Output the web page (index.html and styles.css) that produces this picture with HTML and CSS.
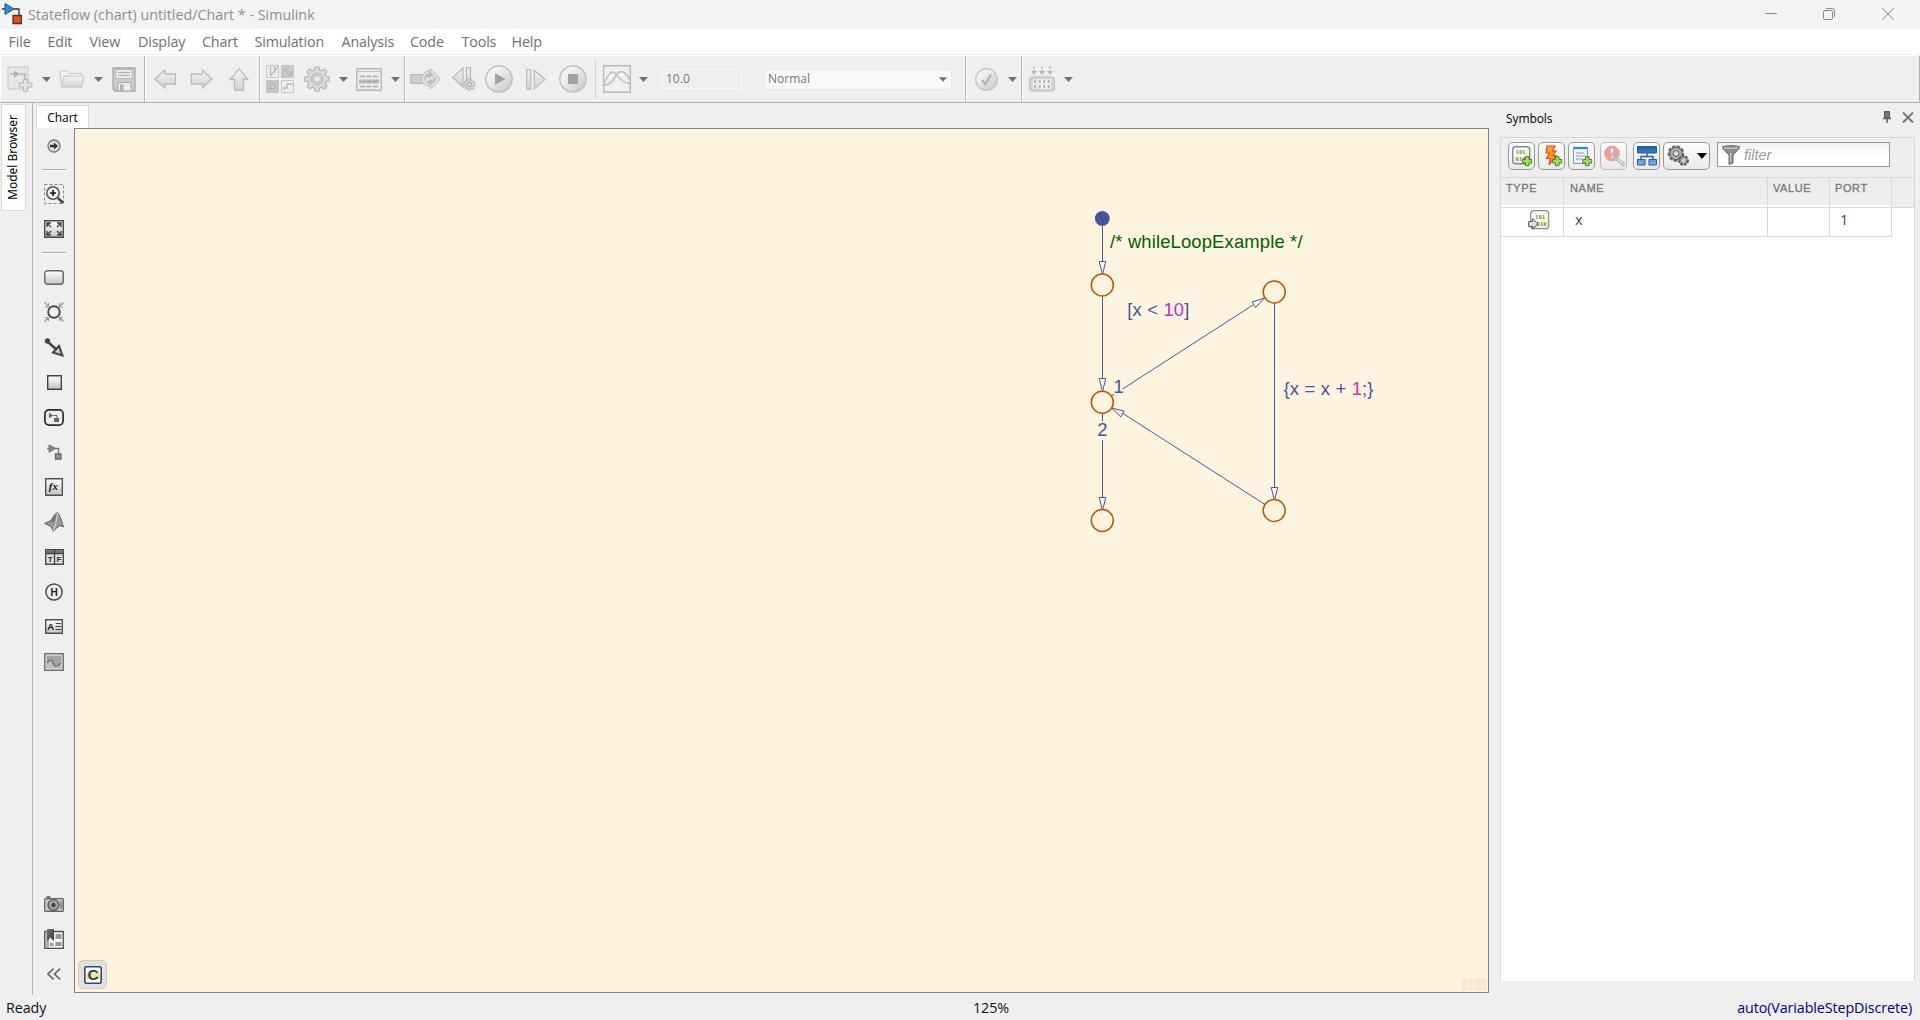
FILE: index.html
```html
<!DOCTYPE html>
<html lang="en">
<head>
<meta charset="utf-8">
<title>Stateflow (chart) untitled/Chart * - Simulink</title>
<link rel="stylesheet" href="styles.css">
</head>
<body>
<svg class="defs" width="0" height="0" aria-hidden="true">
  <defs>
    <linearGradient id="lite" x1="0" y1="0" x2="0" y2="1"><stop offset="0" stop-color="#f4f4f4"/><stop offset="1" stop-color="#d2d2d2"/></linearGradient>
    <linearGradient id="disc" x1="0" y1="0" x2="1" y2="1"><stop offset="0.3" stop-color="#f2f2f2"/><stop offset="1" stop-color="#c4c4c4"/></linearGradient>
    <linearGradient id="steel" x1="0" y1="0" x2="0" y2="1"><stop offset="0" stop-color="#ffffff"/><stop offset="1" stop-color="#c4c4c4"/></linearGradient>
    <linearGradient id="dark" x1="0" y1="0" x2="1" y2="1"><stop offset="0" stop-color="#777"/><stop offset="1" stop-color="#333"/></linearGradient>
    <linearGradient id="blue" x1="0" y1="0" x2="0" y2="1"><stop offset="0" stop-color="#1d5fae"/><stop offset="1" stop-color="#7db4e6"/></linearGradient>
    <linearGradient id="cream" x1="0" y1="0" x2="1" y2="1"><stop offset="0" stop-color="#ffffff"/><stop offset="1" stop-color="#fff0a0"/></linearGradient>
    <symbol id="plus" viewBox="0 0 12 12"><path d="M4 .8h4V4h3.200v4H8v3.200H4V8H.8V4H4z" fill="#a4dc5c" stroke="#3f7d1c" stroke-width="1.100"/></symbol>
    <symbol id="tri" viewBox="0 0 9 5"><path d="M0 0h9L4.500 5z" fill="#707174"/></symbol>
  </defs>
</svg>

<header class="titlebar">
  <svg class="app-icon" width="20" height="22" viewBox="0 0 20 22">
    <path d="M0 6h4M12 6h5v8" fill="none" stroke="#333" stroke-width="1.300"/>
    <path d="M3 .5L12 6 3 11.500z" fill="#2d8fd0" stroke="#125a90"/>
    <path d="M11 12.500h8.500v8H11z" fill="#e0511b" stroke="#7c2408" stroke-width="1.300"/>
  </svg>
  <h1 class="title"><span>Stateflow (chart) untitled/Chart * - Simulink</span></h1>
  <div class="window-controls">
    <svg width="12" height="12" viewBox="0 0 12 12"><path d="M0 5.500h12"/></svg>
    <svg width="12" height="12" viewBox="0 0 12 12"><rect x=".5" y="2.500" width="9" height="9" rx="1.500"/><path d="M3 .6h6.500q2 0 2 2V9"/></svg>
    <svg width="12" height="12" viewBox="0 0 12 12"><path d="M.3.3l11.400 11.400M11.700.3L.3 11.700"/></svg>
  </div>
</header>

<nav class="menubar">
  <a>File</a><a>Edit</a><a>View</a><a>Display</a><a>Chart</a><a>Simulation</a><a>Analysis</a><a>Code</a><a>Tools</a><a>Help</a>
</nav>

<div class="toolbar">
  <div class="group g-file">
    <svg width="26" height="26" viewBox="0 0 26 26"><path d="M1 1h20v22H1z" fill="#e6e6e6" stroke="#c8c8c8"/><path d="M3 8h4m6 0h5v5" stroke="#b4b4b4" fill="none" stroke-width="1.500"/><path d="M7 4.500L13 8l-6 3.500z" fill="#b0b0b0"/><path d="M16.500 13.500h4V17H25v4h-4.500v4.500h-4V21H12v-4h4.500z" fill="#e2e2e2" stroke="#b8b8b8"/></svg>
    <svg class="tri" width="9" height="5"><use href="#tri"/></svg>
    <svg width="26" height="18" viewBox="0 0 26 18"><path d="M2.500 16.500L.8 1h7l1.700 2.500h13V6" fill="#f4f4f4" stroke="#c6c6c6"/><path d="M5 6h20l-2 11H2.500z" fill="url(#lite)" stroke="#c6c6c6"/></svg>
    <svg class="tri" width="9" height="5"><use href="#tri"/></svg>
    <svg width="24" height="25" viewBox="0 0 24 25"><path d="M1 1h22v23H3l-2-2z" fill="#ccc" stroke="#aaa" stroke-width="1.300"/><path d="M4 2.500h16v9H4z" fill="#f2f2f2" stroke="#b8b8b8"/><path d="M6 5.500h12M6 8.500h12" stroke="#b2b2b2" stroke-width="1.400"/><path d="M6 15.500h13V24H6z" fill="#eee" stroke="#aaa"/><path d="M8 17.500h3.500V24H8z" fill="#b0b0b0"/></svg>
  </div>
  <div class="group g-nav">
    <svg width="22" height="20" viewBox="0 0 22 20"><path d="M.8 10L11 1v4h10.500v10H11v4z" fill="url(#lite)" stroke="#bcbcbc" stroke-width="1.300"/></svg>
    <svg width="23" height="20" viewBox="0 0 22 20"><path d="M21.200 10L12 1v4H.7v10H12v4z" fill="url(#lite)" stroke="#bcbcbc" stroke-width="1.300"/></svg>
    <svg width="20" height="23" viewBox="0 0 20 23"><path d="M10 .8L1 11.500h4.500v10.800h9V11.500H19z" fill="url(#lite)" stroke="#bcbcbc" stroke-width="1.300"/></svg>
  </div>
  <div class="group g-model">
    <svg width="28" height="28" viewBox="0 0 28 28"><g stroke="#c4c4c4"><path d="M.5.500h12v12H.5z" fill="#ededed"/><path d="M15.500.500h12v12h-12z" fill="#c8c8c8"/><path d="M.5 15.500h12v12H.5z" fill="#c4c4c4"/><path d="M15.500 15.500h12v12h-12z" fill="#eee"/></g><path d="M4.500 1v10M4.500 11L12 2M8.500 1v5.500M17 7q2.500-6 4.500 0t4.500 0M18 25v-2h3v-4h5.500" fill="none" stroke="#b8b8b8" stroke-width="1.300"/><path d="M4.500 19.500h4v4h-4z" fill="#d4d4d4" stroke="#aaa"/></svg>
    <svg width="26" height="26" viewBox="0 0 26 26"><path d="M11 1h4l.6 3 2 .9L20.200 3l2.800 2.800-1.800 2.600.9 2 3 .6v4l-3 .6-.9 2 1.800 2.600-2.800 2.800-2.600-1.800-2 .9-.6 3h-4l-.6-3-2-.9L5.800 23 3 20.200l1.800-2.600-.9-2-3-.6v-4l3-.6.9-2L3 5.800 5.800 3l2.600 1.900 2-.9z" fill="#dcdcdc" stroke="#b6b6b6" stroke-width="1.200"/><circle cx="13" cy="13" r="6" fill="#cecece" stroke="#b9b9b9"/><circle cx="13" cy="13" r="3.500" fill="#eee" stroke="#bbb"/></svg>
    <svg class="tri" width="9" height="5"><use href="#tri"/></svg>
    <svg width="26" height="23" viewBox="0 0 26 23"><path d="M.7.700h24.600v21.600H.7z" fill="#ececec" stroke="#b8b8b8" stroke-width="1.400"/><path d="M1 3.500h24" stroke="#c3c3c3"/><path d="M4 8.500h18" stroke="#aaa" stroke-width="1.400" stroke-dasharray="5 1.500"/><path d="M3 11.500h20v4H3z" fill="#bdbdbd"/><path d="M4.500 13.500h17M4 18.500h18" stroke="#aaa" stroke-width="1.300" stroke-dasharray="5 1.500"/></svg>
    <svg class="tri" width="9" height="5"><use href="#tri"/></svg>
  </div>
  <div class="group g-sim">
    <svg width="30" height="22" viewBox="0 0 30 22"><path d="M.7 6.500h11v9H.7z" fill="#cdcdcd" stroke="#b4b4b4"/><path d="M14 5q3-3 6-2V.5L29.300 9.500v3L20 21.300V18q-9 0-9-8 1-3 3-5z" fill="#dedede" stroke="#bfbfbf"/><path d="M15 11.500q0-5 5-5M18.500 4l3.500 2.500-3.500 2.800M25 9.500q0 5-5 5M21.500 12L18 14.500l3.500 2.800" fill="none" stroke="#b0b0b0" stroke-width="1.300"/></svg>
    <svg width="24" height="24" viewBox="0 0 24 24"><path d="M11 1L.8 10.500 11 20zM14.500.700h4v18h-4z" fill="url(#lite)" stroke="#b8b8b8" stroke-width="1.200"/><circle cx="17.500" cy="17.500" r="5" fill="#d8d8d8" stroke="#b8b8b8" stroke-width="2" stroke-dasharray="2.400 1"/><circle cx="17.500" cy="17.500" r="2" fill="#eee" stroke="#b0b0b0" stroke-width="1.300"/></svg>
    <svg width="28" height="28" viewBox="0 0 28 28"><circle cx="14" cy="14" r="13.200" fill="url(#disc)" stroke="#bcbcbc" stroke-width="1.300"/><path d="M10 8l10.500 6L10 20z" fill="#a2a2a2"/></svg>
    <svg width="20" height="21" viewBox="0 0 20 21"><path d="M.7.700h4v19.600h-4zM8.300 1.200L19 10.500 8.300 19.800z" fill="url(#lite)" stroke="#bdbdbd" stroke-width="1.300"/></svg>
    <svg width="28" height="28" viewBox="0 0 28 28"><circle cx="14" cy="14" r="13.200" fill="url(#disc)" stroke="#bcbcbc" stroke-width="1.300"/><path d="M9 9h10v10H9z" fill="#a2a2a2"/></svg>
    <i class="divider"></i>
    <svg width="28" height="28" viewBox="0 0 28 28"><path d="M.7.700h26.600v26.600H.7z" fill="#f0f0f0" stroke="#b8b8b8" stroke-width="1.400"/><path d="M1 18C4 13 6 7 10 7S16 18 27 18.500" fill="none" stroke="#bbb" stroke-width="1.300"/><path d="M1 20C6 20 9 18 12 12s9-9 15 3" fill="none" stroke="#c5c5c5" stroke-width="2"/></svg>
    <svg class="tri" width="9" height="5"><use href="#tri"/></svg>
    <div class="time">10.0</div>
    <div class="mode">Normal<svg width="8" height="5"><use href="#tri"/></svg></div>
  </div>
  <div class="group g-check">
    <svg width="23" height="23" viewBox="0 0 23 23"><circle cx="11.500" cy="11.500" r="10.800" fill="url(#disc)" stroke="#c2c2c2" stroke-width="1.300"/><path d="M7 12l3.500 4L16 6.500" fill="none" stroke="#b5b5b5" stroke-width="2.300"/></svg>
    <svg class="tri" width="9" height="5"><use href="#tri"/></svg>
  </div>
  <div class="group g-build">
    <svg width="26" height="26" viewBox="0 0 26 26"><path d="M5 0v7M13 0v7M21 0v7" stroke="#c0c0c0" stroke-width="1.400" stroke-dasharray="3 1"/><path d="M2 5h6L5 9zM10 5h6l-3 4zM18 5h6l-3 4z" fill="#b8b8b8"/><rect x=".7" y="11" width="24.600" height="14" rx="2" fill="#d6d6d6" stroke="#b9b9b9"/><path d="M4 15.500h18M4 20.500h18" stroke="#fafafa" stroke-width="4"/><path d="M5 15.500h16M5 20.500h16" stroke="#aaa" stroke-width="2.400" stroke-dasharray="2.400 2.100"/></svg>
    <svg class="tri" width="9" height="5"><use href="#tri"/></svg>
  </div>
</div>

<main class="workspace">
  <aside class="browser-strip"><div class="browser-tab">Model Browser</div></aside>
  <section class="editor">
    <div class="tabs"><div class="tab">Chart</div></div>
    <div class="editor-body">
      <div class="palette">
        <div class="tool first"><svg width="14" height="14" viewBox="0 0 14 14"><circle cx="7" cy="7" r="6" fill="#ddd" stroke="#777" stroke-width="1.300"/><path d="M3 5.800h4V3.500L11 7l-4 3.500V8.200H3z" fill="#333"/></svg></div>
        <hr>
        <div class="tool"><svg width="20" height="20" viewBox="0 0 20 20"><path d="M.5.500h19v19H.5z" fill="none" stroke="#888" stroke-dasharray="3 2"/><circle cx="9" cy="9" r="6.200" fill="#f4f4f4" stroke="#555" stroke-width="1.500"/><path d="M14 14l5 5" stroke="#444" stroke-width="2.500"/><path d="M6 9h6M9 6v6" stroke="#111" stroke-width="1.600"/></svg></div>
        <div class="tool"><svg width="20" height="18" viewBox="0 0 20 18"><path d="M.7.700h18.600v16.600H.7z" fill="url(#steel)" stroke="#4a4a4a" stroke-width="1.400"/><path d="M3 7V3h4M3 3l4 4M13 3h4v4m0-4l-4 4M3 11v4h4m-4 0l4-4m6 4h4v-4m0 4l-4-4" fill="none" stroke="#3c3c3c" stroke-width="1.300"/></svg></div>
        <hr>
        <div class="tool"><svg width="20" height="15" viewBox="0 0 20 15"><rect x=".7" y=".7" width="18.600" height="13.600" rx="3" fill="url(#steel)" stroke="#666" stroke-width="1.400"/></svg></div>
        <div class="tool"><svg width="20" height="20" viewBox="0 0 20 20"><circle cx="10" cy="10" r="5.800" fill="#f0f0f0" stroke="#484848" stroke-width="1.900"/><path d="M.5.500l4 4M4.500 1v4H1M19.500.500l-4 4M15.500 1v4H19M.5 19.500l4-4M1 15.500h3.500V19M19.500 19.500l-4-4M15.500 19v-3.500H19" fill="none" stroke="#999" stroke-width="1.200"/></svg></div>
        <div class="tool"><svg width="20" height="19" viewBox="0 0 20 19"><circle cx="3.500" cy="3" r="2.700" fill="#444"/><path d="M4 4l9 8" stroke="#444" stroke-width="2.400"/><path d="M18.500 17.500L9 14.500l6-6.500z" fill="#ccc" stroke="#444" stroke-width="2"/></svg></div>
        <div class="tool"><svg width="15" height="15" viewBox="0 0 15 15"><path d="M.7.700h13.600v13.600H.7z" fill="url(#steel)" stroke="#444" stroke-width="1.400"/></svg></div>
        <div class="tool"><svg width="20" height="17" viewBox="0 0 20 17"><rect x=".9" y=".9" width="18.200" height="15.200" rx="4" fill="#eee" stroke="#2c2c2c" stroke-width="1.700"/><path d="M5 4l4.500 2.500L5 9z" fill="#666"/><path d="M9.500 6.500H13V9" fill="none" stroke="#666"/><path d="M10 9h5v4h-5z" fill="#666"/></svg></div>
        <div class="tool"><svg width="15" height="16" viewBox="0 0 15 16"><path d="M0 4.500h2M8 4.500h3.500V10" fill="none" stroke="#777" stroke-width="1.300"/><path d="M2 .8l6.500 3.700L2 8.300z" fill="#888" stroke="#777"/><path d="M8.500 10h5.500v5H8.500z" fill="#999" stroke="#666" stroke-width="1.300"/></svg></div>
        <div class="tool"><svg width="18" height="18" viewBox="0 0 18 18"><path d="M.7.700h16.600v16.600H.7z" fill="url(#steel)" stroke="#505050" stroke-width="1.400"/><text x="3.800" y="12.300" class="glyph fx">fx</text></svg></div>
        <div class="tool"><svg width="20" height="20" viewBox="0 0 20 20"><path d="M.5 11.500L7 8.500Q11 1 13.500.500 15.500 2 19.500 15 16 12.500 13.500 15L9.500 19.500 7 14.500z" fill="#999" stroke="#555" stroke-width=".9"/><path d="M7 8.500l3 2.500L13.500.500" fill="#777"/><path d="M13.500 1Q12 13 9.500 19" fill="none" stroke="#ddd"/></svg></div>
        <div class="tool"><svg width="19" height="16" viewBox="0 0 19 16"><path d="M.7.700h17.600v14.600H.7z" fill="#ddd" stroke="#4a4a4a" stroke-width="1.400"/><path d="M1 1h17v3.500H1z" fill="#777"/><path d="M1 4.500h17M9.500 0v16" stroke="#444" stroke-width="1.300"/><text x="2.700" y="13" class="glyph tf">T</text><text x="11.600" y="13" class="glyph tf">F</text></svg></div>
        <div class="tool"><svg width="18" height="18" viewBox="0 0 18 18"><circle cx="9" cy="9" r="8.100" fill="#f0f0f0" stroke="#484848" stroke-width="1.500"/><text x="5.400" y="12.600" class="glyph hist">H</text></svg></div>
        <div class="tool"><svg width="18" height="15" viewBox="0 0 18 15"><path d="M.7.700h16.600v13.600H.7z" fill="url(#steel)" stroke="#505050" stroke-width="1.400"/><text x="2.200" y="11" class="glyph note">A</text><path d="M10.500 4.500H16M10.500 7.500H16M10.500 10.500H16" stroke="#444" stroke-width="1.200"/></svg></div>
        <div class="tool"><svg width="20" height="18" viewBox="0 0 20 18"><path d="M.7.700h18.600v16.600H.7z" fill="#ccc" stroke="#707070" stroke-width="1.300"/><path d="M3 3h14v12H3z" fill="#a4a4a4"/><path d="M3 9q4-5 6 0t7 1l1-2v7H3z" fill="#bfbfbf"/><path d="M3 10q4-6 6 0t8 0" fill="none" stroke="#707070" stroke-width="1.500"/></svg></div>
        <div class="spacer"></div>
        <div class="tool"><svg width="20" height="16" viewBox="0 0 20 16"><path d="M2.500 0h4v2h-4z" fill="#777"/><rect x=".6" y="2.600" width="18.800" height="12.800" rx="1" fill="#c6c6c6" stroke="#666" stroke-width="1.200"/><circle cx="9.500" cy="9" r="5.500" fill="#999" stroke="#555" stroke-width="1.200"/><circle cx="9.500" cy="9" r="2.800" fill="#444" stroke="#bbb"/><path d="M16 5h3v8h-3z" fill="#999"/></svg></div>
        <div class="tool"><svg width="20" height="20" viewBox="0 0 20 20"><path d="M.7 2.500h18.600v16.800H.7z" fill="#f2f2f2" stroke="#505050" stroke-width="1.300"/><path d="M1.500 3H5v16H1.500z" fill="#aaa"/><path d="M11.500 5h6v5h-6zM11.500 13h6v4h-6zM6 14h3.500v3H6z" fill="#999"/><path d="M3 0h7v12l-3.500-3.500L3 12z" fill="url(#dark)"/></svg></div>
        <div class="tool"><svg width="14" height="12" viewBox="0 0 14 12"><path d="M6.500.700L1 6l5.500 5.300M13 .7L7.500 6l5.500 5.300" fill="none" stroke="#666" stroke-width="1.700"/></svg></div>
      </div>
      <div class="canvas">
        <svg class="chart" width="340" height="350" viewBox="1060 190 340 350">
          <g class="edges">
            <path d="M1102.500 225v36M1102.500 297v82M1102.500 413v8M1102.500 440v57M1274.500 303v184M1111.500 396l3-2.200M1122.500 389l131-84.300M1265 504.500l-142-91"/>
            <path d="M1099.200 261.500h6.600l-3.300 13zM1099.200 378.500h6.600l-3.300 13zM1099.200 497.500h6.600l-3.300 13zM1271.200 487.500h6.600l-3.300 13zM1264.500 298l-9 9.500-3.300-5.500zM1111.500 408l12.500 3-3.200 6z"/>
          </g>
          <circle cx="1102.300" cy="218.400" r="7.400" fill="#47529c"/>
          <g class="junctions"><circle cx="1102.300" cy="285" r="11"/><circle cx="1102.300" cy="402.200" r="11"/><circle cx="1102.300" cy="520.500" r="11"/><circle cx="1274.200" cy="292" r="11"/><circle cx="1274.200" cy="510.500" r="11"/></g>
          <g class="labels">
            <text x="1110" y="248" textLength="192.500" class="comment">/* whileLoopExample */</text>
            <text x="1127.300" y="315.500" textLength="62">[x &lt; <tspan class="num">10</tspan>]</text>
            <text x="1113.500" y="392.800">1</text>
            <text x="1097.300" y="436">2</text>
            <text x="1283.500" y="394.800" textLength="90">{x = x + <tspan class="num">1</tspan>;}</text>
          </g>
        </svg>
        <div class="action-language"><svg width="18" height="18" viewBox="0 0 18 18"><rect x=".8" y=".8" width="16.400" height="16.400" rx="2" fill="#fff" stroke="#2c4a7c" stroke-width="1.600"/><path d="M2 7h14v6H2z" fill="#ffe38a"/><text x="3.400" y="14.300" class="glyph lang">C</text></svg></div>
        <div class="grip"><i></i><i></i><i></i></div>
      </div>
    </div>
  </section>

  <aside class="symbols">
    <div class="symbols-head"><span>Symbols</span>
      <svg width="8" height="13" viewBox="0 0 8 13"><path d="M1.500.500h5v6h-5z" fill="#777" stroke="#555"/><path d="M0 7.500h8M4 8v4" stroke="#666" stroke-width="1.600"/></svg>
      <svg width="12" height="11" viewBox="0 0 12 11"><path d="M1 .5l10 10M11 .5l-10 10" stroke="#777" stroke-width="2"/></svg>
    </div>
    <div class="symbols-box">
      <div class="symbols-tools">
        <div class="sbtn"><svg width="22" height="22" viewBox="0 0 22 22"><rect x="1.700" y="1.700" width="17" height="17" rx="3" fill="url(#cream)" stroke="#6d8fae" stroke-width="1.400"/><text x="4.500" y="9" class="glyph bits">101</text><text x="4.500" y="16" class="glyph bits">010</text><use href="#plus" x="11" y="11" width="10.500" height="10.500"/></svg></div>
        <div class="sbtn"><svg width="22" height="22" viewBox="0 0 22 22"><path d="M6 1h8l-2.500 5H15l-3.500 4.500H15L8 20l1.500-6.500H5.500L8.500 8H5z" fill="#f9a11b" stroke="#dd4b26" stroke-width="1.200"/><use href="#plus" x="11" y="11" width="10.500" height="10.500"/></svg></div>
        <div class="sbtn"><svg width="22" height="22" viewBox="0 0 22 22"><path d="M2.500 2.500h14v16h-14z" fill="#eef4fa" stroke="#8099b2"/><path d="M2.500 3h14" stroke="#2f8bd2" stroke-width="2.200"/><path d="M5 8h8M5 11h9M5 14h6" stroke="#8d9aa7"/><use href="#plus" x="11" y="11" width="10.500" height="10.500"/></svg></div>
        <div class="sbtn off"><svg width="22" height="22" viewBox="0 0 22 22"><circle cx="9" cy="8.500" r="7.800" fill="#ef7f78"/><path d="M7.800 3.500h2.500v6H7.800zM7.800 11h2.500v2.500H7.800z" fill="#fff"/><path d="M20 19l-7-6" stroke="#8a8a8a" stroke-width="3.600" stroke-linecap="round"/><path d="M20 19l-7-6" stroke="#ddd" stroke-width="2" stroke-linecap="round"/><circle cx="11.500" cy="11" r="3.500" fill="none" stroke="#aaa" stroke-width="2" stroke-dasharray="17 5"/></svg></div>
        <div class="sbtn"><svg width="22" height="22" viewBox="0 0 22 22"><path d="M11 7v5M5 14v-2.500h12V14" fill="none" stroke="#255d9e" stroke-width="1.400"/><g fill="url(#blue)" stroke="#255d9e"><path d="M1.500 1.500h19V8h-19zM1.500 14.500H9V20H1.500zM13 14.500h7.500V20H13z"/></g></svg></div>
        <div class="sbtn wide"><svg width="23" height="22" viewBox="0 0 23 22"><circle cx="9" cy="8.500" r="7" fill="#aaa" stroke="#666" stroke-width="2.600" stroke-dasharray="3.500 1.300"/><circle cx="9" cy="8.500" r="6" fill="#b4b4b4" stroke="#666"/><circle cx="9" cy="8.500" r="3" fill="#ddd" stroke="#555"/><circle cx="16.500" cy="15.500" r="4.300" fill="#aaa" stroke="#555" stroke-width="2.200" stroke-dasharray="2.500 1.100"/><circle cx="16.500" cy="15.500" r="1.500" fill="#ddd"/></svg><svg width="10" height="6" viewBox="0 0 10 6"><path d="M0 0h10L5 6z" fill="#000"/></svg></div>
        <div class="filter"><svg width="18" height="20" viewBox="0 0 18 20"><path d="M.8 1.500q8-2 16.400 0v2L11 10v8l-4 1.500V10L.8 3.500z" fill="#8e8e8e" stroke="#666"/><path d="M2 2.700q7 1.300 14 0" stroke="#ddd" fill="none"/><path d="M8.500 8v9" stroke="#ccc" stroke-width="1.200"/></svg>filter</div>
      </div>
      <div class="row head"><span>TYPE</span><span>NAME</span><span>VALUE</span><span>PORT</span><span class="rest"></span></div>
      <div class="row data"><span class="type"><svg width="22" height="20" viewBox="0 0 22 20"><rect x="2.700" y=".7" width="18" height="18" rx="3" fill="url(#cream)" stroke="#7795ae" stroke-width="1.300"/><text x="7.300" y="8.500" class="glyph bits">101</text><text x="8.500" y="16" class="glyph bits">010</text><path d="M.7 11.500h4V8.500L10 14l-5.300 5V16.500h-4z" fill="#ddd" stroke="#555"/></svg></span><span class="name">x</span><span></span><span class="port">1</span></div>
    </div>
  </aside>
</main>

<footer class="status"><span class="ready">Ready</span><span class="zoom">125%</span><span class="solver">auto(VariableStepDiscrete)</span></footer>
</body>
</html>
```
FILE: styles.css
```css
* { box-sizing: border-box; }
body {
  margin: 0; width: 1920px; height: 1020px; overflow: hidden;
  display: flex; flex-direction: column;
  background: #efefef; color: #1a1a1a;
  font: 14px "Open Sans", "Noto Sans", sans-serif;
}
svg { display: block; flex: none; }
.defs { position: absolute; }

.titlebar { height: 29px; flex: none; background: #f3f3f3; display: flex; align-items: flex-start; color: #8f8f8f; }
.app-icon { margin: 3px 0 0 2px; }
.title { margin: 0 0 0 6px; font-size: 14.300px; font-weight: 400; line-height: 29px; flex: 1; }
.window-controls { display: flex; gap: 47px; padding: 8px 26px 0 0; }
.window-controls svg { fill: none; stroke: #8a8a8a; stroke-width: 1; }
.window-controls svg:first-child { margin-right: -1px; }

.menubar {
  height: 26px; flex: none; background: #fff; color: #707070; border-bottom: 1px solid #f0f0f0;
  display: grid; grid-template-columns: 39px 42px 48.500px 64px 52.500px 87px 68.500px 51.500px 50px 40px;
  padding-left: 8.500px; font-size: 14.300px; line-height: 26px; letter-spacing: -.15px;
}

.toolbar { height: 48px; flex: none; display: flex; border-top: 1px solid #fff; border-bottom: 1px solid #b2b2b2; border-right: 1px solid #b2b2b2; }
.group { display: grid; align-items: center; border-left: 1px solid #fff; border-right: 1px solid #b4b4b4; }
.g-file { width: 145px; padding-left: 6px; grid-template-columns: 35px 17px 35px 18px 24px; }
.g-nav { width: 115px; padding-left: 8px; grid-template-columns: 36px 39px 20px; }
.g-model { width: 145px; padding-left: 5px; grid-template-columns: 38px 35px 17px 35px 9px; }
.g-sim { width: 561px; padding-left: 4px; grid-template-columns: 42px 33px 41px 33px 36px 8px 36px 23px 102px 188px; }
.g-check { width: 56px; padding-left: 8px; grid-template-columns: 33px 9px; }
.g-build { flex: 1; padding-left: 6px; grid-template-columns: 35px 9px; border-right: 0; }
.divider { width: 1px; height: 38px; background: #d0d0d0; }
.time, .mode { height: 20px; font-size: 12px; line-height: 18px; color: #767676; border: 1px solid #f8f8f8; }
.time { width: 80px; padding-left: 3px; }
.mode { width: 188px; height: 21px; background: #f9f9f9; border: 1px solid #e8e8e8; border-radius: 3px; padding: 0 4px 0 3px; display: flex; align-items: center; justify-content: space-between; }

.workspace { flex: 1; display: flex; min-height: 0; }
.browser-strip { width: 33px; border-right: 1px solid #b3b3b3; padding: 1px 0 0 1px; height: 892px; }
.browser-tab {
  width: 25px; height: 107px; background: #fff; border: 1px solid #d9d9d9; writing-mode: vertical-rl;
  transform: rotate(180deg); text-align: center; font: 12px/22px "Noto Sans", sans-serif; color: #000;
}
.editor { width: 1456px; height: 890px; display: flex; flex-direction: column; }
.tabs { height: 25px; padding: 2px 0 0 3px; }
.tab { width: 53px; height: 23px; background: #fff; border: 1px solid #d9d9d9; border-bottom: 0; text-align: center; font-size: 12px; line-height: 23px; color: #000; letter-spacing: -.1px; }
.editor-body { flex: 1; display: flex; }
.palette { width: 41px; display: flex; flex-direction: column; align-items: center; padding: 0 0 1px 1px; }
.tool { height: 34.950px; width: 26px; display: flex; align-items: center; justify-content: center; }
.tool.first { height: 36px; }
.spacer ~ .tool { height: 35.300px; }
.palette hr { width: 24px; height: 2px; border: 0; margin: 5px 0 6px; background: linear-gradient(#aaa 50%, #fff 50%); flex: none; }
.spacer { flex: 1; }
.canvas { position: relative; flex: 1; background: #fff4e0; border: 1px solid #80838f; }
.chart { position: absolute; left: 985px; top: 61px; }
.edges { fill: #fff4e0; stroke: #4c56a0; stroke-width: 1; }
.junctions { fill: #fff4e0; stroke: #b4580c; stroke-width: 1.500; }
.labels { font: 18.400px "Liberation Sans", Arial, sans-serif; fill: #47529c; }
.comment { fill: #006000; }
.num { fill: #c932b8; }
.action-language { position: absolute; left: 3px; bottom: 3px; width: 29px; height: 29px; border: 1px solid #ccc8c2; border-radius: 5px; background: #e6e0d6; display: flex; align-items: center; justify-content: center; }
.grip { position: absolute; right: 1px; bottom: 1px; display: flex; gap: 1px; }
.grip i { width: 5px; height: 13px; background: #f2e9d4; }
.grip i:last-child { width: 13px; }

.glyph { font-family: "Liberation Sans", Arial, sans-serif; font-weight: 700; fill: #333; }
.fx { font: italic 700 11px "Liberation Serif", serif; fill: #111; }
.tf { font-size: 8px; }
.hist { font-size: 10px; fill: #222; }
.note { font-size: 9.500px; fill: #111; }
.lang { font-size: 15.500px; fill: #24426e; }
.bits { font: 700 6px "Liberation Serif", serif; fill: #5b7d9e; letter-spacing: .4px; }

.symbols { margin-left: 11px; width: 415px; }
.symbols-head { height: 34px; display: flex; align-items: flex-start; padding: 8px 1px 0 6px; font-size: 12px; line-height: 16px; color: #000; letter-spacing: -.1px; }
.symbols-head span { flex: 1; }
.symbols-head svg:nth-of-type(1) { margin-right: 11px; }
.symbols-head svg:nth-of-type(2) { margin: 1px 0 0 0; }
.symbols-box { height: 844px; background: #fff; border: 1px solid #d8d8d8; border-bottom: 0; }
.symbols-tools { height: 40px; background: #eee; border-bottom: 1px solid #d8d8d8; display: flex; padding: 4px 0 0 7px; gap: 3px; }
.sbtn { width: 27px; height: 28px; border: 1px solid #999; border-radius: 5px; background: linear-gradient(#fdfdfd, #eaeaea); display: flex; align-items: center; justify-content: center; }
.sbtn.off { border-color: #bbb; margin-left: 2px; }
.sbtn.off svg { opacity: .75; }
.sbtn.off + .sbtn { margin-left: 3px; }
.sbtn.wide { width: 47px; gap: 7px; }
.filter { margin-left: 4px; width: 173px; height: 25px; border: 1px solid #999; background: linear-gradient(#f0f0f0, #fff 55%); display: flex; align-items: center; gap: 4px; padding-left: 4px; font: italic 14.500px "Liberation Sans", Arial, sans-serif; color: #9a9a9a; }
.row { display: grid; grid-template-columns: 63px 204px 62px 62px 1fr; }
.row span { border-right: 1px solid #d9d9d9; }
.head { height: 27px; background: #eee; font: 11px/21px "Liberation Sans", Arial, sans-serif; color: #777; letter-spacing: .6px; -webkit-text-stroke: .3px #777; }
.head span { padding-left: 5px; border-bottom: 1px solid #d9d9d9; }
.head span:nth-child(2) { padding-left: 6px; }
.head .rest { height: 30px; background: #eee; border-right: 0; }
.data { height: 32px; font: 14.500px/30px "Open Sans", sans-serif; color: #444; }
.data span { border-bottom: 1px solid #d9d9d9; }
.type { padding: 5px 0 0 27px; }
.data .name { padding-left: 11px; }
.data .port { padding-left: 10px; }

.status { height: 28px; flex: none; display: grid; grid-template-columns: 967px 1fr auto; padding: 0 8px 0 6px; line-height: 32px; font-size: 14.300px; letter-spacing: -.1px; color: #111; }
.solver { color: #000080; }
```
